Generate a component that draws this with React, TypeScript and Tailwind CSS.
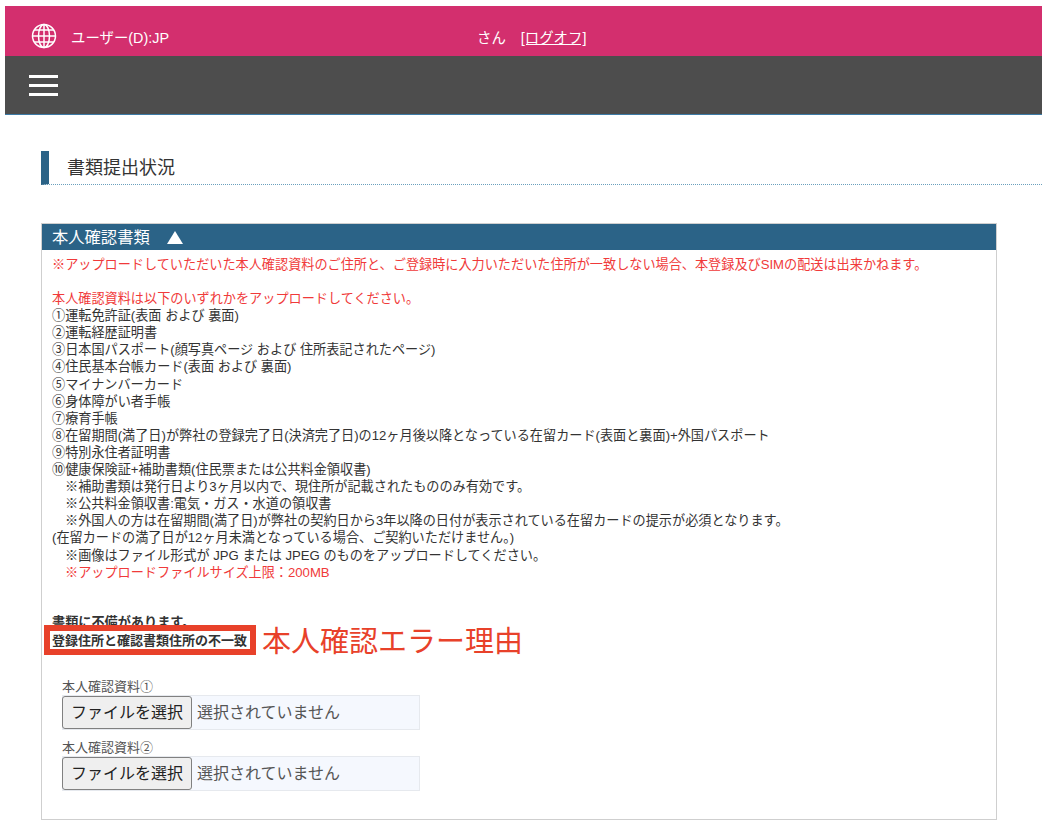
const font = { fontFamily: '"Liberation Sans", "Noto Sans CJK JP", sans-serif' };

const documents = [
  "①運転免許証(表面 および 裏面)",
  "②運転経歴証明書",
  "③日本国パスポート(顔写真ページ および 住所表記されたページ)",
  "④住民基本台帳カード(表面 および 裏面)",
  "⑤マイナンバーカード",
  "⑥身体障がい者手帳",
  "⑦療育手帳",
  "⑧在留期間(満了日)が弊社の登録完了日(決済完了日)の12ヶ月後以降となっている在留カード(表面と裏面)+外国パスポート",
  "⑨特別永住者証明書",
  "⑩健康保険証+補助書類(住民票または公共料金領収書)",
];

const notes = [
  "※補助書類は発行日より3ヶ月以内で、現住所が記載されたもののみ有効です。",
  "※公共料金領収書:電気・ガス・水道の領収書",
  "※外国人の方は在留期間(満了日)が弊社の契約日から3年以降の日付が表示されている在留カードの提示が必須となります。",
];

function GlobeIcon() {
  return (
    <svg viewBox="0 0 26 26" className="w-[26px] h-[26px]" fill="none" stroke="white" strokeWidth="1.5">
      <circle cx="13" cy="13" r="11.5" />
      <ellipse cx="13" cy="13" rx="5.5" ry="11.5" />
      <path d="M13 1.5v23M1.5 13h23M3.2 7h19.6M3.2 19h19.6" />
    </svg>
  );
}

function FileRow({ label }: { label: string }) {
  return (
    <div className="mb-[9px]">
      <div className="text-[13px] leading-[17px] text-[#555]">{label}</div>
      <div className="w-[358px] h-[35px] flex items-center bg-[#f5f8fe] border border-[#e6e9ee]">
        <div className="w-[130px] h-[33px] -ml-px flex items-center justify-center bg-[#efefef] border-[1.5px] border-[#808080] rounded-[3px] text-[16px] text-[#222]">
          ファイルを選択
        </div>
        <span className="ml-[5px] text-[16px] text-[#555]">選択されていません</span>
      </div>
    </div>
  );
}

export default function App() {
  return (
    <div className="w-[1042px] h-[830px] overflow-hidden bg-white pt-[6px] pl-[5px]" style={font}>
      <header>
        <div className="h-[50px] bg-[#d32f6e] flex items-center pt-[16px] text-white text-[14.4px]">
          <div className="ml-[26px] -translate-y-[3px]">
            <GlobeIcon />
          </div>
          <span className="ml-[14px]">ユーザー(D):JP</span>
          <span className="ml-[308px]">さん</span>
          <a className="ml-[15px] underline">[ログオフ]</a>
        </div>
        <div className="h-[59px] bg-[#4d4d4d] border-b border-[#3d7ba6] flex items-center pl-[24px]">
          <div className="w-[29px] flex flex-col gap-[6px]">
            <span className="h-[3px] bg-white" />
            <span className="h-[3px] bg-white" />
            <span className="h-[3px] bg-white" />
          </div>
        </div>
      </header>

      <main className="pl-[36px]">
        <div className="mt-[36px] h-[34px] flex items-center border-l-[8px] border-l-[#2b6387] border-b border-b-[#6aa0bd] border-dotted [border-left-style:solid] pt-[2px] pl-[18px] text-[18px] text-[#333]">
          書類提出状況
        </div>

        <section className="mt-[38px] w-[956px] h-[597px] border border-[#cfcfcf]">
          <div className="h-[26px] bg-[#2b6387] text-white text-[16.3px] flex items-center pl-[10px]">
            本人確認書類
            <span className="ml-[17px] w-0 h-0 border-x-[8px] border-x-transparent border-b-[13px] border-b-white" />
          </div>

          <div className="relative pt-[6px] pl-[10px] text-[13.15px] leading-[17.1px] text-[#333]">
            <p className="text-[#f03a3a]">
              ※アップロードしていただいた本人確認資料のご住所と、ご登録時に入力いただいた住所が一致しない場合、本登録及びSIMの配送は出来かねます。
            </p>
            <p className="mt-[17px] text-[#f03a3a]">本人確認資料は以下のいずれかをアップロードしてください。</p>
            {documents.map((line) => (
              <p key={line}>{line}</p>
            ))}
            {notes.map((line) => (
              <p key={line} className="pl-[13px]">{line}</p>
            ))}
            <p>(在留カードの満了日が12ヶ月未満となっている場合、ご契約いただけません。)</p>
            <p className="pl-[13px]">※画像はファイル形式が JPG または JPEG のものをアップロードしてください。</p>
            <p className="pl-[13px] text-[#f03a3a]">※アップロードファイルサイズ上限：200MB</p>

            <p className="mt-[33px] font-bold">書類に不備があります。</p>
            <p className="mt-[1px] text-[13px] font-bold whitespace-nowrap">登録住所と確認書類住所の不一致</p>

            {/* annotation drawn over the screenshot */}
            <div className="absolute left-[2px] top-[375px] w-[212px] h-[30px] border-[6px] border-[#e8412a]" />
            <div className="absolute left-[220px] top-[376px] text-[29px] leading-[32px] text-[#e8412a] whitespace-nowrap">
              本人確認エラー理由
            </div>

            <div className="mt-[29px] ml-[10px]">
              <FileRow label="本人確認資料①" />
              <FileRow label="本人確認資料②" />
            </div>
          </div>
        </section>
      </main>
    </div>
  );
}
